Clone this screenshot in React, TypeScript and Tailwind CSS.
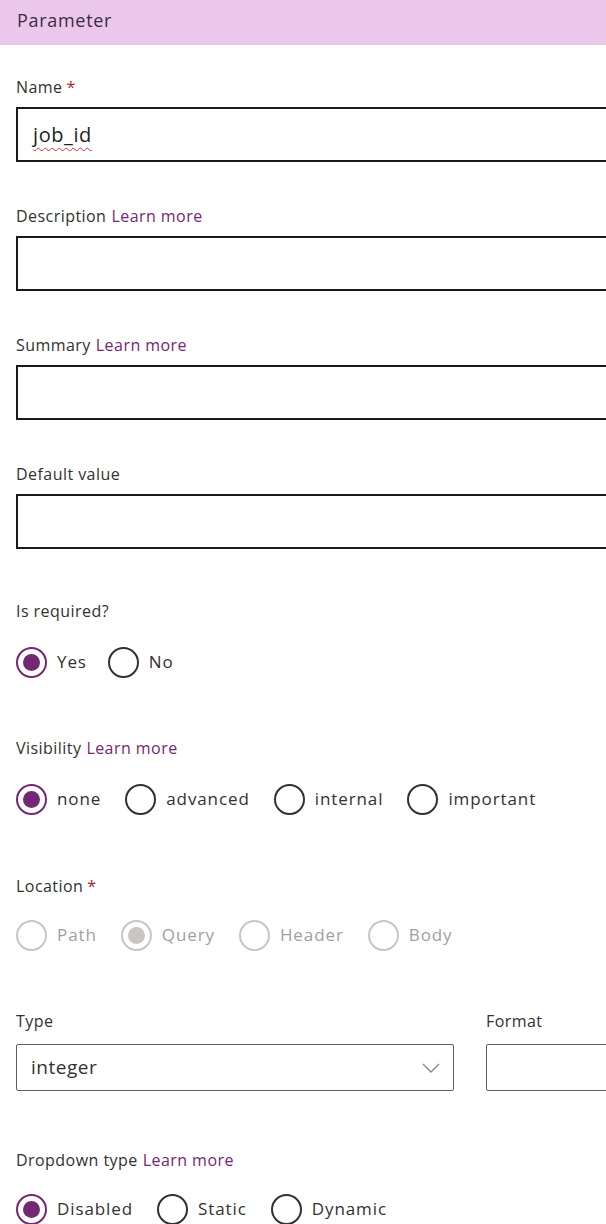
import React from "react";

const font = { fontFamily: '"Open Sans", "Noto Sans", sans-serif' };

function Label({ text, required, learn }: { text: string; required?: boolean; learn?: boolean }) {
  return (
    <div className="h-[22px] flex items-center text-[16px] tracking-[0.45px] leading-[22px] text-[#323130] whitespace-nowrap">
      <span>{text}</span>
      {required && <span className="ml-[4px] text-[#a4262c]">*</span>}
      {learn && <span className="ml-[5px] text-[#742774]">Learn more</span>}
    </div>
  );
}

function Radio({ label, checked, disabled }: { label: string; checked?: boolean; disabled?: boolean }) {
  const ring = disabled ? "border-[#c8c6c4]" : checked ? "border-[#742774]" : "border-[#323130]";
  const dot = disabled ? "bg-[#c8c6c4]" : "bg-[#742774]";
  return (
    <div className="flex items-center">
      <div className={`w-[31px] h-[31px] rounded-full border-2 ${ring} flex items-center justify-center`}>
        {checked && <div className={`w-[17px] h-[17px] rounded-full ${dot}`} />}
      </div>
      <span className={`ml-[10px] text-[17px] tracking-[0.9px] ${disabled ? "text-[#a19f9d]" : "text-[#323130]"}`}>{label}</span>
    </div>
  );
}

function TextField({ value }: { value?: string }) {
  return (
    <div className="mt-[9px] h-[55px] w-[620px] border-2 border-[#1b1a19] flex items-center pl-[15px]">
      {value && (
        <span className="text-[20px] tracking-[0.6px] text-[#201f1e] underline decoration-wavy decoration-[#d13438] decoration-1 underline-offset-[5px]">
          {value}
        </span>
      )}
    </div>
  );
}

export default function App() {
  return (
    <div className="w-[606px] h-[1224px] overflow-hidden bg-white" style={font}>
      <div className="h-[45px] bg-[#ebc8eb] flex items-center pb-[5px] pl-[17px] text-[18px] tracking-[0.7px] text-[#3b2c45]">Parameter</div>
      <div className="pl-[16px] flex flex-col">
        <div className="mt-[31px]">
          <Label text="Name" required />
          <TextField value="job_id" />
        </div>
        <div className="mt-[43px]">
          <Label text="Description" learn />
          <TextField />
        </div>
        <div className="mt-[43px]">
          <Label text="Summary" learn />
          <TextField />
        </div>
        <div className="mt-[43px]">
          <Label text="Default value" />
          <TextField />
        </div>
        <div className="mt-[51px]">
          <Label text="Is required?" />
          <div className="mt-[24px] flex items-center h-[32px] gap-[21px]">
            <Radio label="Yes" checked />
            <Radio label="No" />
          </div>
        </div>
        <div className="mt-[59px]">
          <Label text="Visibility" learn />
          <div className="mt-[24px] flex items-center h-[32px] gap-[24px]">
            <Radio label="none" checked />
            <Radio label="advanced" />
            <Radio label="internal" />
            <Radio label="important" />
          </div>
        </div>
        <div className="mt-[60px]">
          <Label text="Location" required />
          <div className="mt-[22px] flex items-center h-[32px] gap-[24px]">
            <Radio label="Path" disabled />
            <Radio label="Query" checked disabled />
            <Radio label="Header" disabled />
            <Radio label="Body" disabled />
          </div>
        </div>
        <div className="mt-[59px] flex">
          <div className="w-[438px] shrink-0">
            <Label text="Type" />
            <div className="mt-[12px] h-[47px] border border-[#605e5c] rounded-[2px] flex items-center justify-between pl-[14px] pr-[12px]">
              <span className="text-[19px] tracking-[0.5px] text-[#323130]">integer</span>
              <svg width="20" height="12" viewBox="0 0 20 12" fill="none">
                <path d="M2 2 L10 10 L18 2" stroke="#8a8886" strokeWidth="1.4" />
              </svg>
            </div>
          </div>
          <div className="ml-[32px] w-[200px] shrink-0">
            <Label text="Format" />
            <div className="mt-[12px] h-[47px] border border-[#605e5c] rounded-[2px]" />
          </div>
        </div>
        <div className="mt-[58px]">
          <Label text="Dropdown type" learn />
          <div className="mt-[22px] flex items-center h-[32px] gap-[24px]">
            <Radio label="Disabled" checked />
            <Radio label="Static" />
            <Radio label="Dynamic" />
          </div>
        </div>
      </div>
    </div>
  );
}
